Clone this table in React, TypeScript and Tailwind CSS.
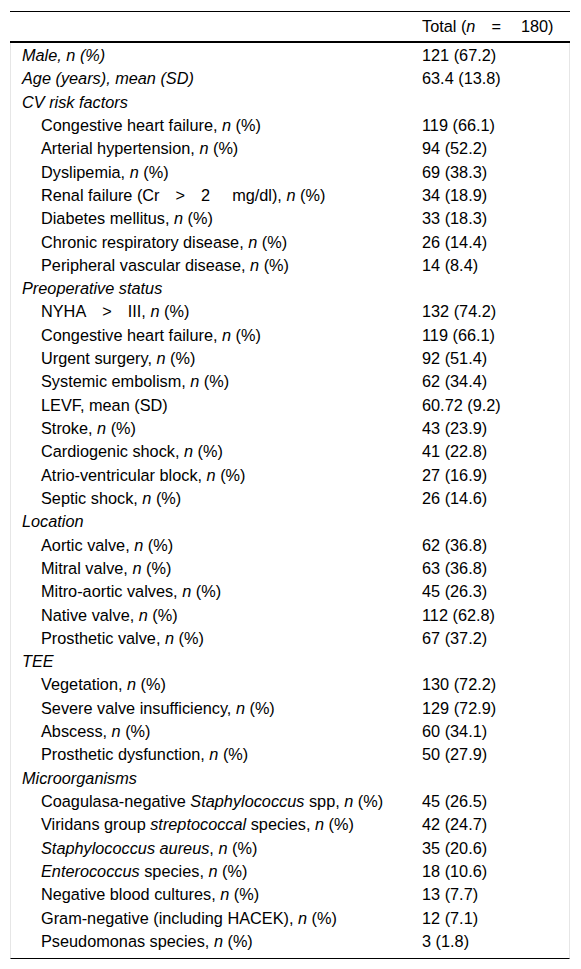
import React from "react";

type Row = { label: React.ReactNode; value?: string; cat?: boolean };

const N = () => <i>n</i>;

const rows: Row[] = [
  { label: <i>Male, n (%)</i>, value: "121 (67.2)", cat: true },
  { label: <i>Age (years), mean (SD)</i>, value: "63.4 (13.8)", cat: true },
  { label: <i>CV risk factors</i>, cat: true },
  { label: <>Congestive heart failure, <N /> (%)</>, value: "119 (66.1)" },
  { label: <>Arterial hypertension, <N /> (%)</>, value: "94 (52.2)" },
  { label: <>Dyslipemia, <N /> (%)</>, value: "69 (38.3)" },
  {
    label: (
      <>
        Renal failure (Cr<span className="ml-[16px] mr-[16px]">&gt;</span>2
        <span className="ml-[22px]">mg/dl), </span>
        <N /> (%)
      </>
    ),
    value: "34 (18.9)",
  },
  { label: <>Diabetes mellitus, <N /> (%)</>, value: "33 (18.3)" },
  { label: <>Chronic respiratory disease, <N /> (%)</>, value: "26 (14.4)" },
  { label: <>Peripheral vascular disease, <N /> (%)</>, value: "14 (8.4)" },
  { label: <i>Preoperative status</i>, cat: true },
  {
    label: (
      <>
        NYHA<span className="ml-[16px] mr-[16px]">&gt;</span>III, <N /> (%)
      </>
    ),
    value: "132 (74.2)",
  },
  { label: <>Congestive heart failure, <N /> (%)</>, value: "119 (66.1)" },
  { label: <>Urgent surgery, <N /> (%)</>, value: "92 (51.4)" },
  { label: <>Systemic embolism, <N /> (%)</>, value: "62 (34.4)" },
  { label: <>LEVF, mean (SD)</>, value: "60.72 (9.2)" },
  { label: <>Stroke, <N /> (%)</>, value: "43 (23.9)" },
  { label: <>Cardiogenic shock, <N /> (%)</>, value: "41 (22.8)" },
  { label: <>Atrio-ventricular block, <N /> (%)</>, value: "27 (16.9)" },
  { label: <>Septic shock, <N /> (%)</>, value: "26 (14.6)" },
  { label: <i>Location</i>, cat: true },
  { label: <>Aortic valve, <N /> (%)</>, value: "62 (36.8)" },
  { label: <>Mitral valve, <N /> (%)</>, value: "63 (36.8)" },
  { label: <>Mitro-aortic valves, <N /> (%)</>, value: "45 (26.3)" },
  { label: <>Native valve, <N /> (%)</>, value: "112 (62.8)" },
  { label: <>Prosthetic valve, <N /> (%)</>, value: "67 (37.2)" },
  { label: <i>TEE</i>, cat: true },
  { label: <>Vegetation, <N /> (%)</>, value: "130 (72.2)" },
  { label: <>Severe valve insufficiency, <N /> (%)</>, value: "129 (72.9)" },
  { label: <>Abscess, <N /> (%)</>, value: "60 (34.1)" },
  { label: <>Prosthetic dysfunction, <N /> (%)</>, value: "50 (27.9)" },
  { label: <i>Microorganisms</i>, cat: true },
  {
    label: (
      <>
        Coagulasa-negative <i>Staphylococcus</i> spp, <N /> (%)
      </>
    ),
    value: "45 (26.5)",
  },
  {
    label: (
      <>
        Viridans group <i>streptococcal</i> species, <N /> (%)
      </>
    ),
    value: "42 (24.7)",
  },
  {
    label: (
      <>
        <i>Staphylococcus aureus</i>, <N /> (%)
      </>
    ),
    value: "35 (20.6)",
  },
  {
    label: (
      <>
        <i>Enterococcus</i> species, <N /> (%)
      </>
    ),
    value: "18 (10.6)",
  },
  { label: <>Negative blood cultures, <N /> (%)</>, value: "13 (7.7)" },
  { label: <>Gram-negative (including HACEK), <N /> (%)</>, value: "12 (7.1)" },
  { label: <>Pseudomonas species, <N /> (%)</>, value: "3 (1.8)" },
];

export default function App() {
  return (
    <div
      className="bg-white w-[581px] h-[969px] pt-[11px] text-[16.3px] text-black"
      style={{ fontFamily: '"Liberation Sans", Arial, sans-serif' }}
    >
      <div className="ml-[10px] w-[560px]">
        <div className="border-t border-black grid grid-cols-[412px_1fr] h-[32px] items-center border-b-2 border-b-black">
          <div />
          <div className="whitespace-nowrap">
            Total (<i>n</i>
            <span className="ml-[16px] mr-[20px]">=</span>180)
          </div>
        </div>
        <div className="border-x border-x-[#e6e6e6] border-b border-b-black pt-px pb-[5px]">
          {rows.map((r, i) => (
            <div
              key={i}
              className="grid grid-cols-[411px_1fr] leading-[23.32px] whitespace-nowrap"
            >
              <div className={r.cat ? "pl-[11px]" : "pl-[30px]"}>{r.label}</div>
              <div>{r.value}</div>
            </div>
          ))}
        </div>
      </div>
    </div>
  );
}
